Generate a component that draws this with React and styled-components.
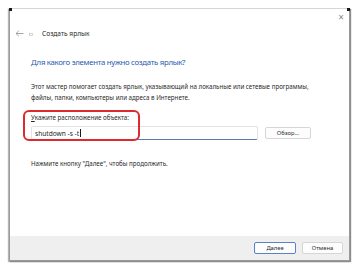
import React from 'react';
import styled, { createGlobalStyle } from 'styled-components';

const GlobalStyle = createGlobalStyle`
  html, body {
    margin: 0;
    padding: 0;
    background: #ffffff;
  }
  body {
    font-family: 'Noto Sans', 'Open Sans', sans-serif;
    color: #1b1b1b;
  }
`;

const App = () => {
  return (
    <React.Fragment>
      <GlobalStyle />
      <Page>
        <Window>
          <CornerMark $side="left" />
          <CornerMark $side="right" />
          <TopBar>
            <CloseButton>×</CloseButton>
          </TopBar>

          <HeaderRow>
            <BackArrow>
              <svg width="9" height="7" viewBox="0 0 9 7" fill="none">
                <path d="M8.5 3.5H1M3.8 0.8L1 3.5l2.8 2.7" stroke="#9a9a9a" strokeWidth="0.9" />
              </svg>
            </BackArrow>
            <WizardIcon>
              <svg width="4" height="3" viewBox="0 0 4 3">
                <rect x="0.4" y="0.4" width="3.2" height="2.2" fill="none" stroke="#c2c2c2" strokeWidth="0.7" />
              </svg>
            </WizardIcon>
            <WindowTitle>Создать ярлык</WindowTitle>
          </HeaderRow>

          <Content>
            <Heading>Для какого элемента нужно создать ярлык?</Heading>

            <Description>
              Этот мастер помогает создать ярлык, указывающий на локальные или сетевые программы,
              <br />
              файлы, папки, компьютеры или адреса в Интернете.
            </Description>

            <FieldBlock>
              <Highlight />
              <FieldLabel>
                <u>У</u>кажите расположение объекта:
              </FieldLabel>
              <FieldRow>
                <TextInput>
                  shutdown -s -t<Caret />
                </TextInput>
                <Button $width={46}>Обзор...</Button>
              </FieldRow>
            </FieldBlock>

            <Hint>Нажмите кнопку "Далее", чтобы продолжить.</Hint>
          </Content>

          <Footer>
            <Button $primary $width={42}>Далее</Button>
            <Button $width={41}>Отмена</Button>
          </Footer>
        </Window>
      </Page>
    </React.Fragment>
  );
};

export default App;

const Page = styled.div`
  width: 359px;
  height: 270px;
  padding: 8px 0 0 9px;
  box-sizing: border-box;
`;

const Window = styled.div`
  position: relative;
  width: 341px;
  height: 253px;
  box-sizing: border-box;
  display: flex;
  flex-direction: column;
  background: #ffffff;
  border: 1px solid #9a9a9a;
  border-top-color: #d6d6d6;
  box-shadow: 1px 1px 1px #8c8c8c, -1px 1px 1px #b5b5b5;
`;

const CornerMark = styled.div`
  position: absolute;
  top: -1px;
  ${({ $side }) => ($side === 'left' ? 'left: -1px;' : 'right: -1px;')}
  width: 3px;
  height: 3px;
  background: #1a1a1a;
`;

const TopBar = styled.div`
  display: flex;
  justify-content: flex-end;
  height: 17px;
`;

const CloseButton = styled.div`
  width: 16px;
  margin-top: 2px;
  font-size: 10px;
  line-height: 12px;
  color: #8a8a8a;
  text-align: center;
`;

const HeaderRow = styled.div`
  display: flex;
  align-items: center;
  height: 14px;
  padding-left: 5px;
`;

const BackArrow = styled.div`
  display: flex;
  width: 14px;
`;

const WizardIcon = styled.div`
  display: flex;
  width: 13px;
  padding-top: 2px;
`;

const WindowTitle = styled.div`
  font-size: 6.6px;
  color: #2a2a2a;
`;

const Content = styled.div`
  flex: 1;
  padding: 16px 0 0 21px;
`;

const Heading = styled.div`
  font-size: 7.8px;
  line-height: 12px;
  letter-spacing: -0.3px;
  color: #2a5cae;
`;

const Description = styled.div`
  margin-top: 13px;
  font-size: 6.2px;
  line-height: 11px;
  color: #2a2a2a;
`;

const FieldBlock = styled.div`
  position: relative;
  margin-top: 10px;
`;

const Highlight = styled.div`
  position: absolute;
  left: -8px;
  top: -3px;
  width: 117px;
  height: 31px;
  box-sizing: border-box;
  border: 2.5px solid #dc2a2e;
  border-radius: 6px;
  pointer-events: none;
`;

const FieldLabel = styled.div`
  font-size: 6.2px;
  line-height: 10px;
  color: #2a2a2a;

  u {
    text-decoration-thickness: 0.5px;
  }
`;

const FieldRow = styled.div`
  display: flex;
  align-items: center;
  gap: 7px;
  margin-top: 3px;
`;

const TextInput = styled.div`
  display: flex;
  align-items: center;
  width: 227px;
  height: 14px;
  box-sizing: border-box;
  padding-left: 3px;
  font-size: 6.6px;
  color: #1b1b1b;
  background: #ffffff;
  border: 1px solid #e3e3e3;
  border-bottom: 1px solid #5a7bb0;
  border-radius: 2px;
`;

const Caret = styled.span`
  display: inline-block;
  width: 0.7px;
  height: 8px;
  margin-left: 0.5px;
  background: #1b1b1b;
`;

const Button = styled.div`
  display: flex;
  align-items: center;
  justify-content: center;
  width: ${({ $width }) => $width}px;
  height: 12px;
  box-sizing: border-box;
  font-size: 5.8px;
  color: #2a2a2a;
  background: #fdfdfd;
  border: 1px solid ${({ $primary }) => ($primary ? '#5b82c4' : '#d6d6d6')};
  border-radius: 2px;
`;

const Hint = styled.div`
  margin-top: 19px;
  font-size: 6.2px;
  line-height: 9px;
  color: #2a2a2a;
`;

const Footer = styled.div`
  display: flex;
  justify-content: flex-end;
  align-items: flex-start;
  gap: 6px;
  height: 24px;
  box-sizing: border-box;
  padding: 6px 6px 0 0;
  background: #efefef;
`;
